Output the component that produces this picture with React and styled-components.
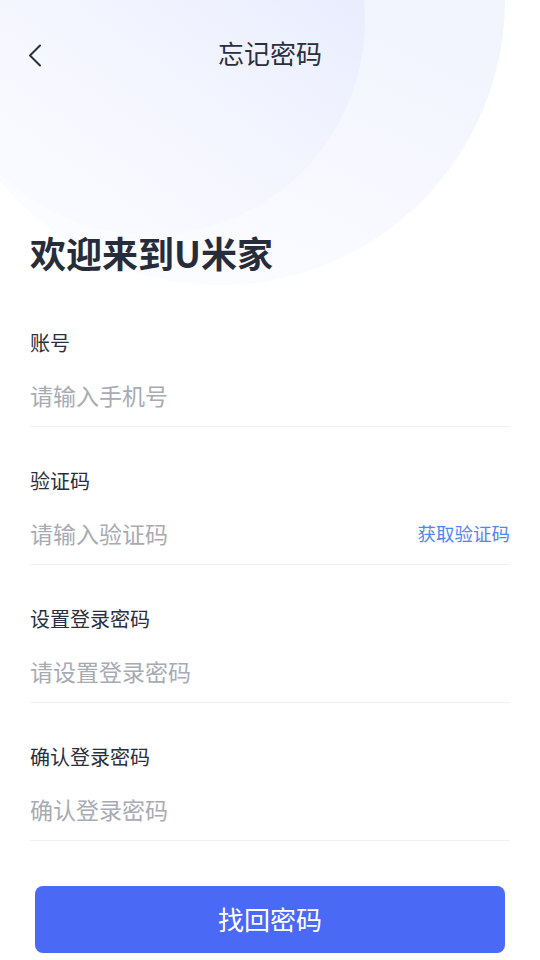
import React from "react";
import styled, { createGlobalStyle } from "styled-components";

const GlobalStyle = createGlobalStyle`
  * { box-sizing: border-box; }
  body {
    margin: 0;
    background: #ffffff;
    font-family: "Noto Sans CJK SC", "Noto Sans", sans-serif;
  }
`;

const fields = [
  { label: "账号", placeholder: "请输入手机号" },
  { label: "验证码", placeholder: "请输入验证码", action: "获取验证码" },
  { label: "设置登录密码", placeholder: "请设置登录密码" },
  { label: "确认登录密码", placeholder: "确认登录密码" },
];

export default function App() {
  return (
    <Page>
      <GlobalStyle />
      <Backdrop>
        <OuterBlob />
        <InnerBlob />
      </Backdrop>
      <Header>
        <BackButton aria-label="返回">
          <svg width="14" height="23" viewBox="0 0 14 23" fill="none">
            <polyline
              points="12,1.5 2,11.5 12,21.5"
              stroke="#2a2f3d"
              strokeWidth="2"
              strokeLinecap="round"
              strokeLinejoin="round"
            />
          </svg>
        </BackButton>
        <Title>忘记密码</Title>
      </Header>
      <Body>
        <Welcome>欢迎来到U米家</Welcome>
        <Form>
          {fields.map((f) => (
            <Field key={f.label}>
              <Label>{f.label}</Label>
              <InputRow>
                <Input placeholder={f.placeholder} />
                {f.action && <CodeLink>{f.action}</CodeLink>}
              </InputRow>
            </Field>
          ))}
        </Form>
        <Submit>找回密码</Submit>
      </Body>
    </Page>
  );
}

const Page = styled.div`
  position: relative;
  width: 540px;
  height: 960px;
  overflow: hidden;
  background: #ffffff;
`;

const Backdrop = styled.div`
  position: absolute;
  inset: 0;
  pointer-events: none;
`;

const OuterBlob = styled.div`
  position: absolute;
  left: -65px;
  top: -285px;
  width: 570px;
  height: 570px;
  border-radius: 50%;
  background: linear-gradient(205deg, #eceffd 0%, #f3f5fe 45%, #fbfcff 85%);
`;

const InnerBlob = styled.div`
  position: absolute;
  left: -65px;
  top: -195px;
  width: 430px;
  height: 430px;
  border-radius: 50%;
  background: linear-gradient(215deg, #dce2fd 0%, #eef1fe 40%, #f8f9ff 75%, #fbfcff 100%);
`;

const Header = styled.header`
  position: relative;
  height: 108px;
  display: flex;
  align-items: center;
  justify-content: center;
`;

const BackButton = styled.button`
  position: absolute;
  left: 28px;
  top: 44px;
  padding: 0;
  border: none;
  background: none;
  display: flex;
`;

const Title = styled.h1`
  margin: 0 0 2px;
  font-size: 26px;
  font-weight: 400;
  color: #2a2f3d;
  line-height: 36px;
`;

const Body = styled.main`
  position: relative;
  padding: 122px 30px 0;
  display: flex;
  flex-direction: column;
`;

const Welcome = styled.h2`
  margin: 0 0 15px;
  font-size: 36px;
  line-height: 44px;
  font-weight: 700;
  color: #272c3b;
`;

const Form = styled.div`
  display: flex;
  flex-direction: column;
`;

const Field = styled.div`
  padding-top: 40px;
  border-bottom: 1px solid #eef0f4;
  display: flex;
  flex-direction: column;
`;

const Label = styled.div`
  font-size: 20px;
  line-height: 28px;
  color: #2a2f3d;
`;

const InputRow = styled.div`
  margin-top: 6px;
  height: 63px;
  display: flex;
  align-items: center;
`;

const Input = styled.input`
  flex: 1;
  min-width: 0;
  border: none;
  outline: none;
  background: transparent;
  padding: 0;
  font-family: "Noto Sans CJK SC", "Noto Sans", sans-serif;
  font-size: 23px;
  color: #2a2f3d;

  &::placeholder {
    color: #a8abb4;
  }
`;

const CodeLink = styled.span`
  font-size: 18.5px;
  color: #4f85f6;
  white-space: nowrap;
`;

const Submit = styled.button`
  margin: 45px 5px 0;
  height: 67px;
  padding: 0 0 3px;
  border: none;
  border-radius: 8px;
  background: #4a69f5;
  color: #ffffff;
  font-family: "Noto Sans CJK SC", "Noto Sans", sans-serif;
  font-size: 26px;
`;
